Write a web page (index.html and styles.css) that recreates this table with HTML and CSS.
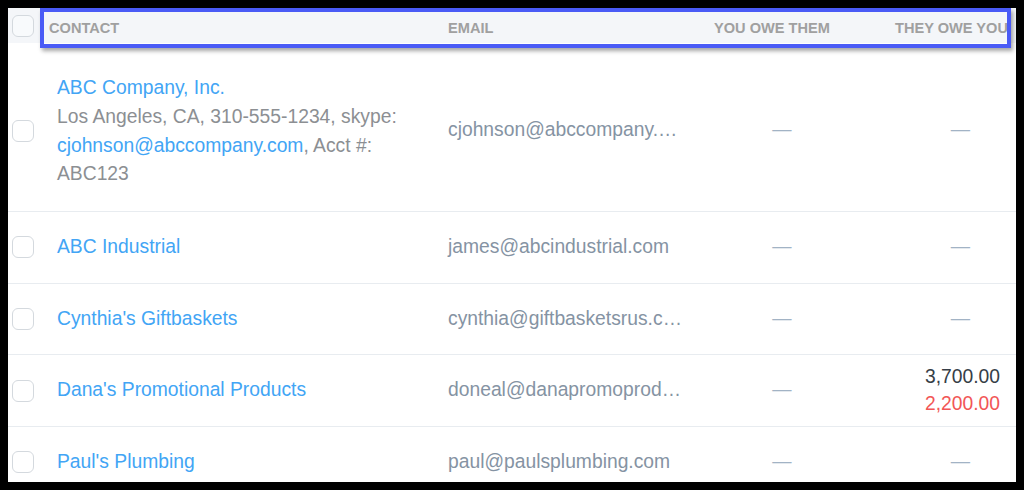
FILE: index.html
```html
<!DOCTYPE html>
<html lang="en">
<head>
    <meta charset="UTF-8">
    <title>Contacts</title>
    <link rel="stylesheet" href="styles.css">
</head>
<body>
    <div class="page">
        <div class="head">
            <div class="check-cell"><span class="checkbox"></span></div>
            <div class="c-contact">Contact</div>
            <div class="c-email">Email</div>
            <div class="c-you">You owe them</div>
            <div class="c-they">They owe you</div>
        </div>

        <div class="row row-tall">
            <div class="check-cell"><span class="checkbox"></span></div>
            <div class="c-contact">
                <a href="#" class="name">ABC Company, Inc.</a><br>
                <span class="meta">Los Angeles, CA, 310-555-1234, skype: <a href="#">cjohnson@abccompany.com</a>, Acct #: ABC123</span>
            </div>
            <div class="c-email">cjohnson@abccompany.com</div>
            <div class="c-you"><span class="dash">—</span></div>
            <div class="c-they"><span class="dash">—</span></div>
        </div>

        <div class="row">
            <div class="check-cell"><span class="checkbox"></span></div>
            <div class="c-contact"><a href="#" class="name">ABC Industrial</a></div>
            <div class="c-email">james@abcindustrial.com</div>
            <div class="c-you"><span class="dash">—</span></div>
            <div class="c-they"><span class="dash">—</span></div>
        </div>

        <div class="row">
            <div class="check-cell"><span class="checkbox"></span></div>
            <div class="c-contact"><a href="#" class="name">Cynthia's Giftbaskets</a></div>
            <div class="c-email">cynthia@giftbasketsrus.com</div>
            <div class="c-you"><span class="dash">—</span></div>
            <div class="c-they"><span class="dash">—</span></div>
        </div>

        <div class="row">
            <div class="check-cell"><span class="checkbox"></span></div>
            <div class="c-contact"><a href="#" class="name">Dana's Promotional Products</a></div>
            <div class="c-email">doneal@danapromoproducts.com</div>
            <div class="c-you"><span class="dash">—</span></div>
            <div class="c-they">
                <span class="amount">3,700.00</span>
                <span class="amount overdue">2,200.00</span>
            </div>
        </div>

        <div class="row">
            <div class="check-cell"><span class="checkbox"></span></div>
            <div class="c-contact"><a href="#" class="name">Paul's Plumbing</a></div>
            <div class="c-email">paul@paulsplumbing.com</div>
            <div class="c-you"><span class="dash">—</span></div>
            <div class="c-they"><span class="dash">—</span></div>
        </div>

        <!-- highlight drawn over the column headers -->
        <div class="focus-ring"></div>
    </div>
</body>
</html>
```

FILE: styles.css
```css
* {
    margin: 0;
    padding: 0;
    box-sizing: border-box;
}

body {
    background-color: #000000;
    font-family: 'Liberation Sans', Arial, sans-serif;
}

.page {
    position: relative;
    margin: 8px;
    width: 1008px;
    height: 474px;
    background-color: #ffffff;
    overflow: hidden;
}

.head,
.row {
    display: grid;
    grid-template-columns: 32px 400px 260px 170px 1fr;
    align-items: center;
}

/* header band */
.head {
    height: 35px;
    padding-right: 9px;
    background-color: #f4f6f9;
    font-size: 14.6px;
    font-weight: 700;
    color: #a0a0a0;
    text-transform: uppercase;
    white-space: nowrap;
}

.head > div {
    overflow: hidden;
    padding-top: 4px;
}

.head .check-cell { padding-top: 0; }
.head .c-contact { padding-left: 9px; }
.head .c-email { padding-left: 8px; }
.head .c-you { padding-left: 14px; }
.head .c-they { padding-left: 25px; }

.check-cell {
    display: flex;
    align-items: center;
}

.checkbox {
    display: block;
    width: 22px;
    height: 22px;
    margin-left: 4px;
    border: 1.5px solid #d4d9de;
    border-radius: 6px;
    background-color: #ffffff;
}

.head .checkbox {
    background-color: #f8fafc;
}

/* table rows */
.row {
    min-height: 71.6px;
    border-bottom: 1px solid #e8ecf0;
    font-size: 19.3px;
    line-height: 28.8px;
}

.row-tall {
    padding-top: 7px;
}

.row-tall .c-contact {
    padding-top: 24px;
    padding-bottom: 22px;
}

.c-contact {
    padding-left: 17px;
    padding-right: 20px;
}

a {
    color: #42a5f5;
    text-decoration: none;
}

.meta {
    color: #8c8f93;
}

.row .c-email {
    padding: 0 18px 0 8px;
    color: #8593a3;
    white-space: nowrap;
    overflow: hidden;
    text-overflow: ellipsis;
}

.row .c-you {
    text-align: center;
    padding-right: 6px;
}

.row .c-they {
    display: flex;
    flex-direction: column;
    align-items: flex-end;
    padding-right: 16px;
    line-height: 26.7px;
}

.dash {
    color: #a2b3c5;
}

.c-they .dash {
    margin-right: 30px;
}

.amount {
    color: #363e47;
}

.amount.overdue {
    color: #f25656;
}

.focus-ring {
    position: absolute;
    left: 32px;
    top: 0;
    width: 971px;
    height: 40px;
    border: 4px solid #4a5bf6;
    box-shadow: 2px 3px 4px rgba(0, 0, 0, 0.35);
    pointer-events: none;
}
```
